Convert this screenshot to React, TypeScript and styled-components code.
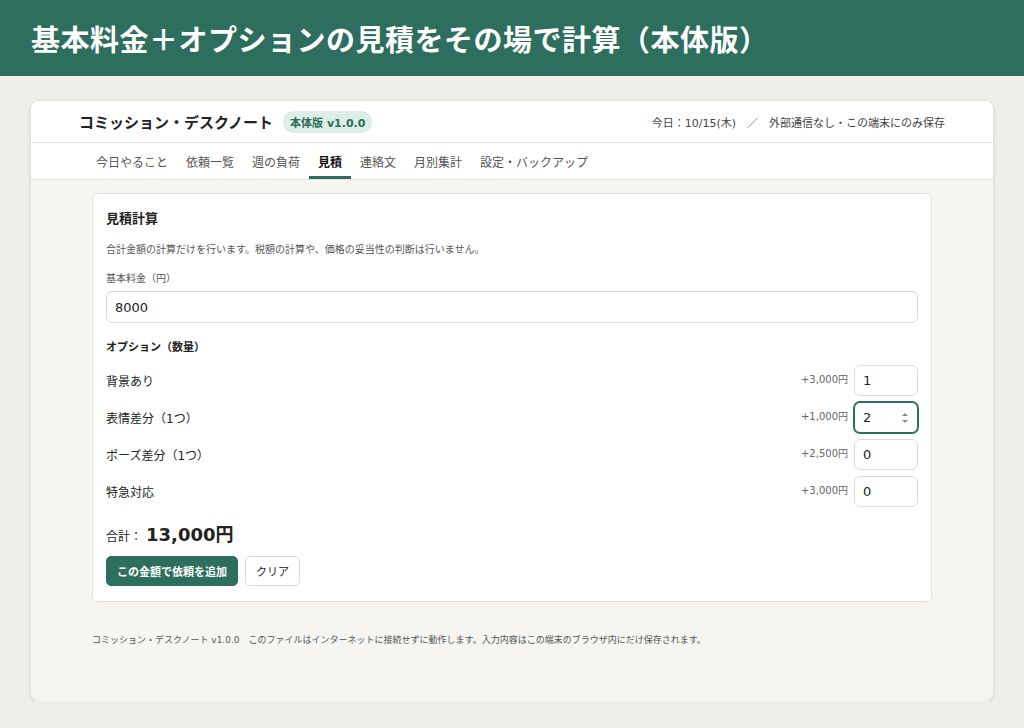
import React from "react";
import styled, { createGlobalStyle } from "styled-components";

const G = createGlobalStyle`
  body { margin:0; background:#efeeea; font-family:"DejaVu Sans","Noto Sans CJK JP",sans-serif; color:#222; }
  * { box-sizing:border-box; }
`;
const Banner = styled.div`height:76px;background:#2e6e5e;color:#fff;display:flex;align-items:center;padding:0 31px;font-size:29px;font-weight:700;font-family:"Noto Sans CJK JP",sans-serif;letter-spacing:0.5px;`;
const Wrap = styled.div`padding:25px 31px 0 31px;`;
const Card = styled.div`background:#f6f5f1;border-radius:8px;box-shadow:0 1px 4px rgba(0,0,0,.15);height:600px;overflow:hidden;`;
const Top = styled.div`background:#fff;height:42px;display:flex;align-items:center;justify-content:space-between;padding:0 48px;border-bottom:1px solid #e2e1dc;`;
const Title = styled.div`display:flex;align-items:center;gap:10px;font-size:15px;font-weight:700;`;
const Badge = styled.span`background:#dcefe7;color:#2b6a58;font-size:11px;font-weight:700;border-radius:10px;padding:3px 7px;`;
const Meta = styled.div`font-size:11px;color:#444;`;
const Tabs = styled.div`background:#fff;height:37px;display:flex;gap:0;padding:0 56px;border-bottom:1px solid #e2e1dc;`;
const Tab = styled.div<{ $a?: boolean }>`padding:0 9px;font-size:12px;display:flex;align-items:center;color:${p => p.$a ? "#111" : "#555"};font-weight:${p => p.$a ? 700 : 400};border-bottom:3px solid ${p => p.$a ? "#2e6e5e" : "transparent"};padding-top:3px;`;
const Body = styled.div`padding:13px 61px 0 61px;`;
const Panel = styled.div`background:#fff;border:1px solid #e2e1dc;border-radius:6px;padding:14px 13px 22px 13px;height:409px;`;
const H = styled.div`font-size:13px;font-weight:700;`;
const Small = styled.div`font-size:10px;color:#555;margin-top:14px;`;
const Input = styled.div<{ $f?: boolean }>`border:1px solid ${p => p.$f ? "#2e6e5e" : "#dddcd7"};box-shadow:${p => p.$f ? "0 0 0 1px #2e6e5e" : "none"};border-radius:6px;font-size:13px;display:flex;align-items:center;justify-content:space-between;padding:0 8px;background:#fff;`;
const Big = styled(Input)`height:32px;margin-top:6px;`;
const Sub = styled.div`font-size:11px;font-weight:700;margin-top:15px;margin-bottom:8px;`;
const Row = styled.div`display:flex;align-items:center;height:37px;font-size:12px;`;
const Lbl = styled.div`flex:1;`;
const Price = styled.div`font-size:10px;color:#666;margin-right:6px;margin-top:-4px;`;
const Qty = styled(Input)`width:64px;height:31px;`;
const Total = styled.div`margin-top:10px;font-size:12px;display:flex;align-items:baseline;gap:4px;& b{font-size:18px;}`;
const Btns = styled.div`display:flex;gap:7px;margin-top:10px;`;
const Btn = styled.button<{ $p?: boolean }>`height:30px;padding:0 10px;border-radius:5px;font-family:inherit;font-size:11px;font-weight:${p => p.$p ? 700 : 400};background:${p => p.$p ? "#2e6e5e" : "#fff"};color:${p => p.$p ? "#fff" : "#222"};border:1px solid ${p => p.$p ? "#2e6e5e" : "#dddcd7"};`;
const Foot = styled.div`font-size:9px;color:#555;padding:31px 61px;`;
const Spin = () => (<svg width="8" height="12" viewBox="0 0 8 12"><path d="M1 4L4 1L7 4Z" fill="#888"/><path d="M1 8L4 11L7 8Z" fill="#888"/></svg>);

const opts = [["背景あり","+3,000円","1"],["表情差分（1つ）","+1,000円","2"],["ポーズ差分（1つ）","+2,500円","0"],["特急対応","+3,000円","0"]];
export default function App() {
  return (<>
    <G />
    <Banner>基本料金＋オプションの見積をその場で計算（本体版）</Banner>
    <Wrap><Card>
      <Top><Title>コミッション・デスクノート<Badge>本体版 v1.0.0</Badge></Title>
        <Meta>今日：10/15(木)　／　外部通信なし・この端末にのみ保存</Meta></Top>
      <Tabs>{["今日やること","依頼一覧","週の負荷","見積","連絡文","月別集計","設定・バックアップ"].map(t => <Tab key={t} $a={t==="見積"}>{t}</Tab>)}</Tabs>
      <Body><Panel>
        <H>見積計算</H>
        <Small>合計金額の計算だけを行います。税額の計算や、価格の妥当性の判断は行いません。</Small>
        <Small>基本料金（円）</Small>
        <Big>8000</Big>
        <Sub>オプション（数量）</Sub>
        {opts.map((o,i) => <Row key={i}><Lbl>{o[0]}</Lbl><Price>{o[1]}</Price><Qty $f={i===1}>{o[2]}{i===1 && <Spin/>}</Qty></Row>)}
        <Total>合計：<b>13,000円</b></Total>
        <Btns><Btn $p>この金額で依頼を追加</Btn><Btn>クリア</Btn></Btns>
      </Panel></Body>
      <Foot>コミッション・デスクノート v1.0.0　このファイルはインターネットに接続せずに動作します。入力内容はこの端末のブラウザ内にだけ保存されます。</Foot>
    </Card></Wrap>
  </>);
}
